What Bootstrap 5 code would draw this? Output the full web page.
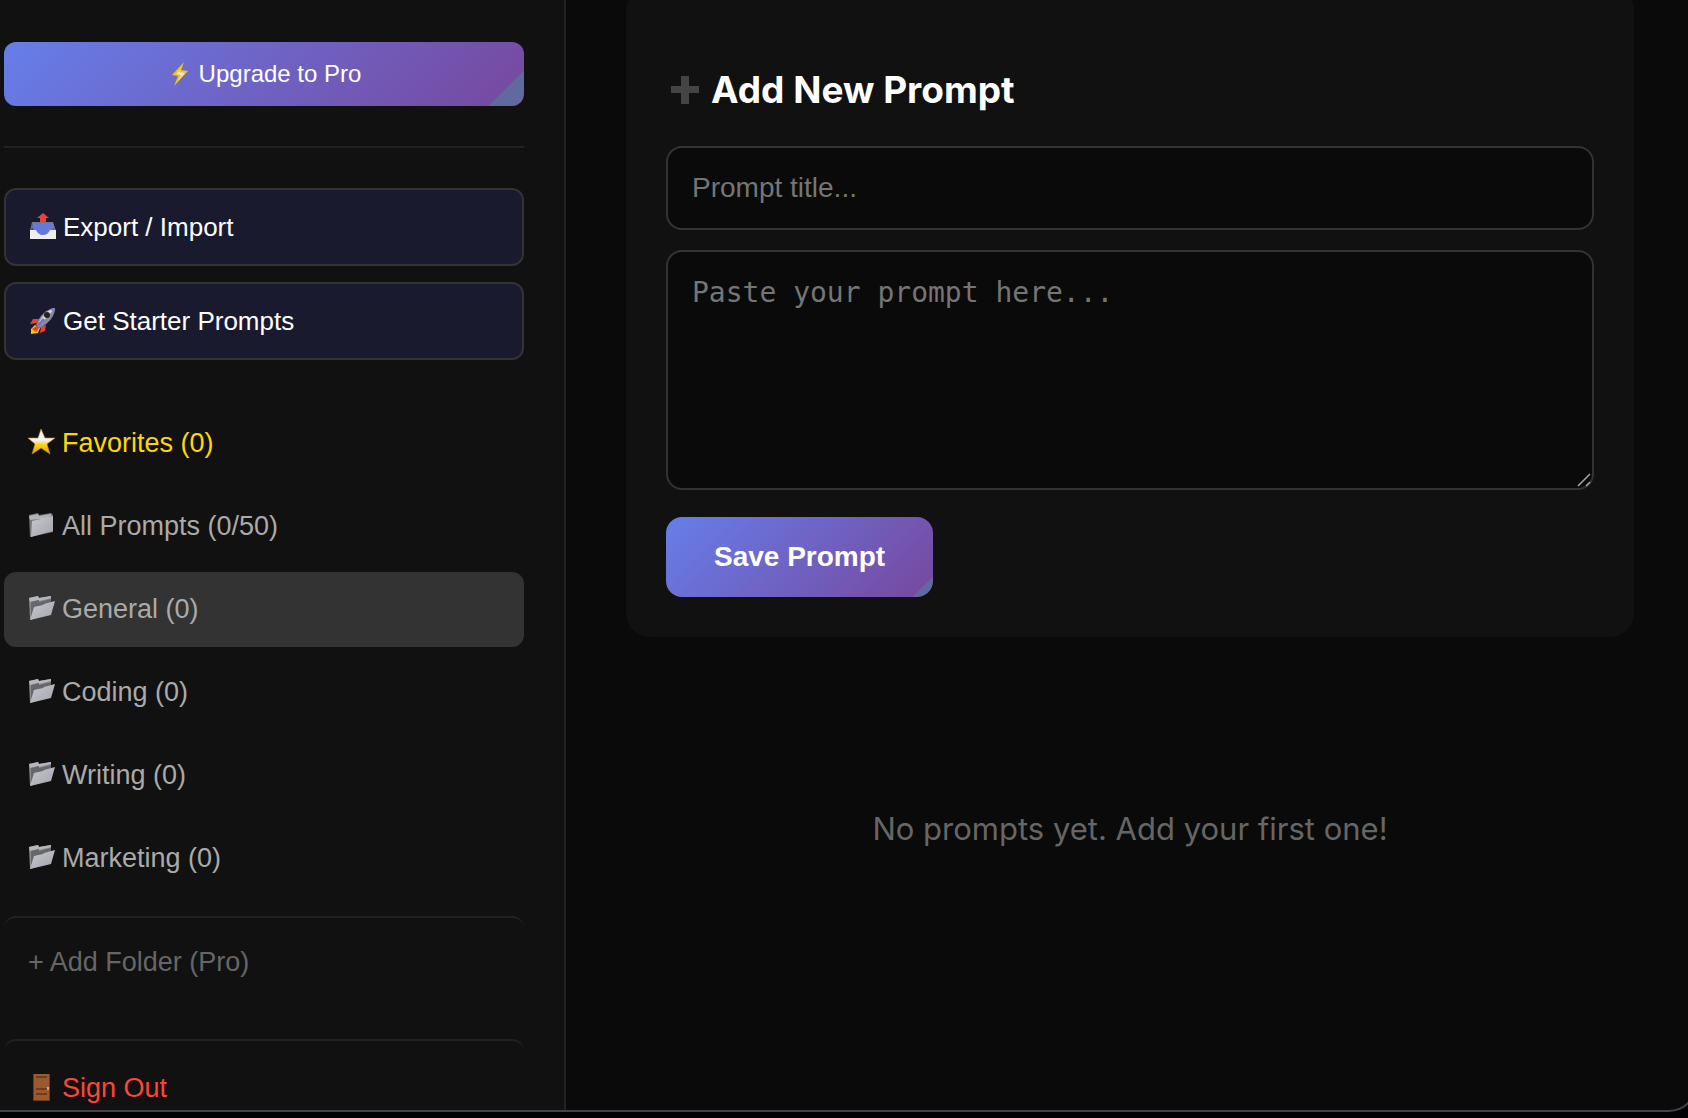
<!DOCTYPE html>
<html lang="en" data-bs-theme="dark">
<head>
<meta charset="utf-8">
<meta name="viewport" content="width=device-width, initial-scale=1">
<title>Prompt Library</title>
<link href="https://cdn.jsdelivr.net/npm/bootstrap@5.3.0/dist/css/bootstrap.min.css" rel="stylesheet">
<style>
  body { background: #020204; overflow: hidden; font-family: Inter, sans-serif; }
  .app-window { height: calc(100vh - 6px); margin-right: -9px; background: #0a0a0a; border: solid #444; border-width: 0 2px 2px 0; border-radius: 0 0 28px 0; overflow: hidden; }
  .side-panel { flex: 0 0 566px; padding: 42px 40px 0 4px; background: #111; border-right: 2px solid #222; font-family: "Liberation Sans", Arial, sans-serif; }
  .side-panel .btn { --bs-btn-border-radius: 12px; font-size: 27px; line-height: 30px; color: #aaa; }
  .btn-grad, .side-panel .btn-grad { color: #fff; border: 0; background: linear-gradient(135deg, #667eea 0%, #764ba2 94%, #6268a0 94%); }
  .side-panel .btn-grad { font-size: 24px; line-height: 28px; padding: 18px 24px; }
  .bolt { width: 18px; height: 24px; margin: 0 10px 0 4px; flex: none; }
  .rule { height: 2px; margin: 40px 0; background: #222; }
  .side-panel .btn-tool { font-size: 26px; padding: 22px 23px; color: #fff; background: #1a1a2e; border: 2px solid #333; }
  .nav-list { margin-top: 46px; }
  .side-panel .btn-item { padding: 22px 24px 23px; border: 0; }
  .side-panel .btn-item.active { background: #333; color: #aaa; }
  .side-panel .fav { color: #ffd60a; }
  .side-panel .btn-line { border: 0; border-top: 2px solid #222; padding: 29px 24px 35px; margin-top: 20px; color: #666; }
  .side-panel .out { color: #ff453a; margin-top: 27px; padding-top: 32px; }
  .ico { width: 28px; height: 28px; margin-right: 6px; flex: none; }
  .main-panel { min-width: 0; padding: 0 61px 0 60px; }
  .form-panel { margin-top: -14px; padding: 82px 40px 40px; background: #111; border-radius: 24px; }
  .form-title { font-size: 37px; line-height: 44px; font-weight: 700; color: #fff; margin-bottom: 34px; }
  .title-ico { width: 28px; height: 28px; margin: 0 12px 0 5px; }
  .form-panel .form-control { background: #0a0a0a; border: 2px solid #333; border-radius: 16px; padding: 24px; font-size: 28px; line-height: 32px; color: #fff; }
  .form-panel .form-control::placeholder { color: #757575; }
  .field-title { font-family: "Liberation Sans", Arial, sans-serif; margin-bottom: 20px; }
  .form-panel .field-body { font-family: "DejaVu Sans Mono", monospace; height: 240px; line-height: 34px; resize: vertical; }
  .field-body::-webkit-resizer { display: none; }
  .body-wrap { margin-bottom: 27px; }
  .grip { position: absolute; right: 3px; bottom: 3px; width: 14px; height: 14px; pointer-events: none; }
  .save-btn { font: 700 28px/32px "Liberation Sans", Arial, sans-serif; padding: 24px 48px; border-radius: 16px; }
  .empty-note { font-size: 31px; line-height: 40px; color: #666; margin-top: 172px; }
</style>
</head>
<body>
<svg width="0" height="0" class="position-absolute" aria-hidden="true">
  <defs>
    <linearGradient id="pg" x2="1" y2="1"><stop stop-color="#c6c7d0"/><stop offset="1" stop-color="#a5a6ab"/></linearGradient>
    <linearGradient id="sg" x2="0" y2="1"><stop offset=".45" stop-color="#f2f2f2"/><stop offset=".62" stop-color="#ffd21c"/><stop offset="1" stop-color="#dba010"/></linearGradient>
  </defs>
  <symbol id="open-folder" viewBox="0 0 28 28"><path d="M1 3l9-2 1 2 12-2v18L2 25z" fill="#8b8c90"/><path d="M1 3l9-2 1 2 12-2v2L11 6l-1-1-8 2z" fill="#b6b7bb"/><path d="M3 7l8-2v2l12-3v5L7 12 3 23z" fill="#66676a"/><path d="M6 12l9-2 1-1 11-3-4 14L2 25z" fill="url(#pg)"/></symbol>
  <symbol id="shut-folder" viewBox="0 0 28 28"><path d="M1 3l9-2 1 2 12-2 2 2v17L2 25z" fill="#77787c"/><path d="M1 4l9-2 1 2 12-2v2L11 7 2 8z" fill="#b3b4b8"/><path d="M4 9l8-2 1-1 12-2v15L3 25z" fill="url(#pg)"/></symbol>
</svg>
<div class="app-window d-flex">
  <aside class="side-panel">
    <button type="button" class="btn btn-grad w-100 d-flex align-items-center justify-content-center">
      <svg viewBox="0 0 18 24" class="bolt" aria-hidden="true"><path d="M13 0L1 13l6 1-4 10L17 9l-7-1z" fill="#edc51c"/><path d="M12 5l-7 7 5 1-3 6 7-8-6-1z" fill="#e6e6ea"/></svg>
      <span>Upgrade to Pro</span>
    </button>
    <div class="rule"></div>
    <div class="d-grid gap-3">
      <button type="button" class="btn btn-tool d-flex align-items-center">
        <svg class="ico" viewBox="0 0 28 28" aria-hidden="true"><path d="M3 9h21l3 9H1z" fill="#77787f"/><path d="M4 10h19l2 8H2z" fill="#41424c"/><path d="M4 10h20l1 4q-4 9-11 9T3 14z" fill="#6678e0"/><path d="M1 17h6q2 5 7 5t7-5h6v9H1z" fill="#eee"/><path d="M14 0l6 5h-3v4h-6V5H8z" fill="#f03e3a"/></svg>
        <span>Export / Import</span>
      </button>
      <button type="button" class="btn btn-tool d-flex align-items-center">
        <svg class="ico" viewBox="0 0 28 28" aria-hidden="true"><path d="M10 12L4 12 1 17l7-1zM17 18l-1 6-5 2 1-6z" fill="#e8403a"/><path d="M6 18l-4 4v5l7-1 2-5z" fill="#ffc412"/><path d="M3 22l6-4 2 2-4 5z" fill="#e8403a"/><path d="M7 18C11 8 17 2 26 1c0 8-6 15-15 20z" fill="#8a8b98"/><path d="M10 15C14 8 19 3 26 1L12 17z" fill="#d9dae2"/><path d="M21 2l5-1-1 5z" fill="#7683d6"/><circle cx="18" cy="8" r="3" fill="#2b1f22"/><path d="M8 18l6-7 2 2-6 6z" fill="#6673d8"/></svg>
        <span>Get Starter Prompts</span>
      </button>
    </div>
    <nav class="nav-list d-grid gap-2">
      <button type="button" class="btn btn-item fav d-flex align-items-center">
        <svg class="ico" viewBox="0 0 28 28" aria-hidden="true"><path d="M13 0l4 9h10l-8 6 3 10-9-6-9 6 3-10-7-6h10z" fill="url(#sg)" stroke="#c98a20" stroke-width=".6"/></svg>
        <span>Favorites (0)</span>
      </button>
      <button type="button" class="btn btn-item d-flex align-items-center"><svg class="ico" aria-hidden="true"><use href="#shut-folder"/></svg><span>All Prompts (0/50)</span></button>
      <button type="button" class="btn btn-item active d-flex align-items-center"><svg class="ico" aria-hidden="true"><use href="#open-folder"/></svg><span>General (0)</span></button>
      <button type="button" class="btn btn-item d-flex align-items-center"><svg class="ico" aria-hidden="true"><use href="#open-folder"/></svg><span>Coding (0)</span></button>
      <button type="button" class="btn btn-item d-flex align-items-center"><svg class="ico" aria-hidden="true"><use href="#open-folder"/></svg><span>Writing (0)</span></button>
      <button type="button" class="btn btn-item d-flex align-items-center"><svg class="ico" aria-hidden="true"><use href="#open-folder"/></svg><span>Marketing (0)</span></button>
    </nav>
    <button type="button" class="btn btn-line w-100 text-start">+ Add Folder (Pro)</button>
    <button type="button" class="btn btn-line out w-100 d-flex align-items-center">
      <svg class="ico" viewBox="0 0 28 28" aria-hidden="true"><path d="M5 0h17v27H5z" fill="#6b3a22"/><path d="M6 0h15v26H6z" fill="#9a5a30"/><path d="M8 3h11M8 15h11M8 20h11" stroke="#703c20" stroke-width="2"/><path d="M19 13h2v3h-2z" fill="#e5b030"/></svg>
      <span>Sign Out</span>
    </button>
  </aside>
  <main class="main-panel flex-grow-1">
    <form class="form-panel">
      <h2 class="form-title d-flex align-items-center">
        <svg class="title-ico" viewBox="0 0 28 28" aria-hidden="true"><path d="M10 0h8v10h10v7H18v11h-8V17H0v-7h10z" fill="#444"/></svg>
        <span>Add New Prompt</span>
      </h2>
      <input type="text" class="form-control field-title" placeholder="Prompt title..." aria-label="Prompt title">
      <div class="body-wrap position-relative">
        <textarea class="form-control field-body" placeholder="Paste your prompt here..." aria-label="Prompt text"></textarea>
        <svg class="grip" viewBox="0 0 14 14" aria-hidden="true"><path d="M1 13L13 1M9 13l4-4" stroke="#a8a8a8" stroke-width="1.500"/></svg>
      </div>
      <button type="button" class="btn btn-grad save-btn">Save Prompt</button>
    </form>
    <p class="empty-note text-center">No prompts yet. Add your first one!</p>
  </main>
</div>
<script src="https://cdn.jsdelivr.net/npm/bootstrap@5.3.0/dist/js/bootstrap.bundle.min.js"></script>
</body>
</html>
